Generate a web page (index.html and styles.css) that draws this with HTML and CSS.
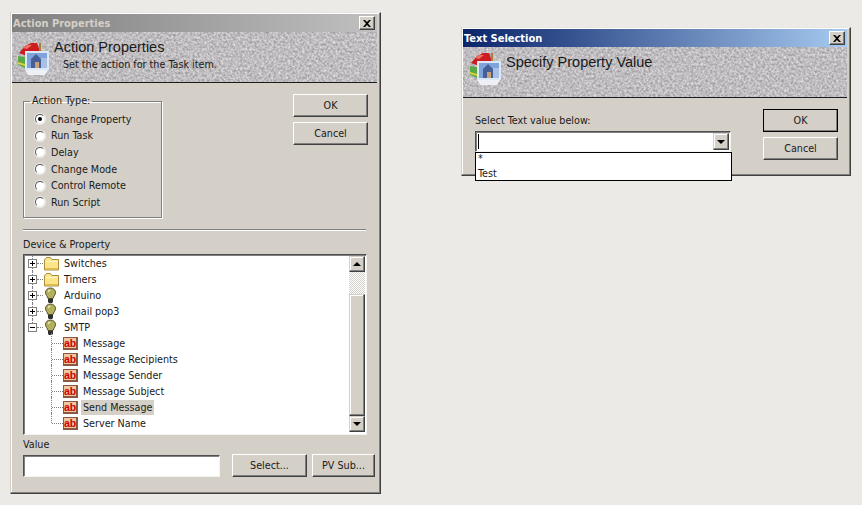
FILE: index.html
```html
<!DOCTYPE html>
<html lang="en">
<head>
<meta charset="utf-8">
<title>Action Properties</title>
<link rel="stylesheet" href="styles.css">
</head>
<body>
<svg class="defs" width="0" height="0" aria-hidden="true">
  <defs>
    <filter id="grain" x="0" y="0" width="100%" height="100%" color-interpolation-filters="sRGB">
      <feTurbulence type="fractalNoise" baseFrequency="0.42" numOctaves="3" seed="7"/>
      <feColorMatrix type="matrix" values="0.42 0 0 0 0.54  0.42 0 0 0 0.53  0.42 0 0 0 0.54  0 0 0 0 1"/>
    </filter>
    <symbol id="house" viewBox="0 0 34 36">
      <path d="M9 28h23l-3 5H12z" fill="#eef0f6"/>
      <path d="M2 14l7 1v11l-7-3z" fill="#58a848"/>
      <path d="M2 20l7 2v2l-7-2z" fill="#e0d040"/>
      <path d="M3 11L9 4l6-3h6l3 8-10 1-3 4z" fill="#cc1c20"/>
      <path d="M7 6l4-3h5l-5 4z" fill="#f07060"/>
      <path d="M23 1h2v9h-2z" fill="#a88038"/>
      <path d="M9 9h24v19H9z" fill="#dde8f6"/>
      <path d="M11 11h20v15H11z" fill="#7fa4dc"/>
      <path d="M15 17l5-5 5 5v9H15z" fill="#465f96"/>
      <path d="M19 20h4v6h-4z" fill="#c8a078"/>
      <path d="M25 16h6v10h-6z" fill="#a8c0e4"/>
    </symbol>
    <symbol id="folder" viewBox="0 0 17 15">
      <path d="M2 3.500L3.500 1.500h4L9 3.500h6.500v10.500H1.500V3.500z" fill="#fbe48a" stroke="#a8903c"/>
      <path d="M2.500 5.500h12.500" stroke="#fff6c8" fill="none"/>
      <path d="M2.500 12.500h12.500" stroke="#e8b840" fill="none"/>
    </symbol>
    <symbol id="bulb" viewBox="0 0 13 17">
      <path d="M6.500 1C3.400 1 1.500 3.200 1.500 5.700c0 2.200 2 3.500 2.500 5.800h5c.5-2.300 2.500-3.600 2.500-5.800C11.500 3.200 9.600 1 6.500 1z" fill="#b4b05c" stroke="#50503a"/>
      <path d="M4 4.500l2-1.500" stroke="#f2f0c0" stroke-width="1.500"/>
      <path d="M4 12h5v3l-1 1H5l-1-1z" fill="#303030"/>
    </symbol>
  </defs>
</svg>

<main class="desktop">

  <section class="window window-action">
    <header class="titlebar titlebar-inactive">
      <span class="title-text">Action Properties</span>
      <span class="close"><svg class="close-x" viewBox="0 0 8 7"><path d="M0 0h2l2 2 2-2h2L5 3.500 8 7H6L4 5 2 7H0l3-3.500z"/></svg></span>
    </header>
    <div class="banner banner-action">
      <svg class="texture"><rect width="100%" height="100%" filter="url(#grain)"/></svg>
      <svg class="banner-icon"><use href="#house"/></svg>
      <div class="banner-text">
        <div class="banner-title">Action Properties</div>
        <div class="banner-sub">Set the action for the Task item.</div>
      </div>
    </div>

    <div class="action-body">
      <div class="action-top">
        <fieldset class="group">
          <legend class="group-legend">Action Type:</legend>
          <div class="radio radio-on"><span class="radio-dot"></span>Change Property</div>
          <div class="radio"><span class="radio-dot"></span>Run Task</div>
          <div class="radio"><span class="radio-dot"></span>Delay</div>
          <div class="radio"><span class="radio-dot"></span>Change Mode</div>
          <div class="radio"><span class="radio-dot"></span>Control Remote</div>
          <div class="radio"><span class="radio-dot"></span>Run Script</div>
        </fieldset>
        <div class="button-col button-col-action">
          <button class="btn btn-wide">OK</button>
          <button class="btn btn-wide">Cancel</button>
        </div>
      </div>

      <div class="separator"></div>

      <div class="field-label label-device">Device &amp; Property</div>
      <div class="tree-box">
        <div class="tree">
          <div class="row row-root"><span class="exp exp-plus"></span><svg class="ic-folder"><use href="#folder"/></svg><span class="row-text">Switches</span></div>
          <div class="row row-root"><span class="exp exp-plus"></span><svg class="ic-folder"><use href="#folder"/></svg><span class="row-text">Timers</span></div>
          <div class="row row-root"><span class="exp exp-plus"></span><svg class="ic-bulb"><use href="#bulb"/></svg><span class="row-text">Arduino</span></div>
          <div class="row row-root"><span class="exp exp-plus"></span><svg class="ic-bulb"><use href="#bulb"/></svg><span class="row-text">Gmail pop3</span></div>
          <div class="row row-root row-open"><span class="exp"></span><svg class="ic-bulb"><use href="#bulb"/></svg><span class="row-text">SMTP</span></div>
          <div class="row row-child"><span class="ab">ab</span><span class="row-text">Message</span></div>
          <div class="row row-child"><span class="ab">ab</span><span class="row-text">Message Recipients</span></div>
          <div class="row row-child"><span class="ab">ab</span><span class="row-text">Message Sender</span></div>
          <div class="row row-child"><span class="ab">ab</span><span class="row-text">Message Subject</span></div>
          <div class="row row-child"><span class="ab">ab</span><span class="row-text row-selected">Send Message</span></div>
          <div class="row row-child row-last"><span class="ab">ab</span><span class="row-text">Server Name</span></div>
        </div>
        <div class="scrollbar">
          <span class="sb-btn"><span class="tri-up"></span></span>
          <span class="sb-track"></span>
          <span class="sb-thumb"></span>
          <span class="sb-btn"><span class="tri-down"></span></span>
        </div>
      </div>

      <div class="field-label label-value">Value</div>
      <div class="value-row">
        <div class="input"></div>
        <button class="btn btn-select">Select...</button>
        <button class="btn btn-pv">PV Sub...</button>
      </div>
    </div>
  </section>

  <section class="window window-text">
    <header class="titlebar titlebar-active">
      <span class="title-text">Text Selection</span>
      <span class="close"><svg class="close-x" viewBox="0 0 8 7"><path d="M0 0h2l2 2 2-2h2L5 3.500 8 7H6L4 5 2 7H0l3-3.500z"/></svg></span>
    </header>
    <div class="banner banner-text-sel">
      <svg class="texture"><rect width="100%" height="100%" filter="url(#grain)"/></svg>
      <svg class="banner-icon"><use href="#house"/></svg>
      <div class="banner-text">
        <div class="banner-title">Specify Property Value</div>
      </div>
    </div>
    <div class="text-body">
      <div class="text-left">
        <div class="field-label">Select Text value below:</div>
        <div class="combo">
          <span class="caret"></span>
          <span class="sb-btn combo-btn"><span class="tri-down"></span></span>
        </div>
      </div>
      <div class="button-col button-col-text">
        <button class="btn btn-wide btn-default">OK</button>
        <button class="btn btn-wide">Cancel</button>
      </div>
    </div>
    <div class="dropdown">
      <div class="drop-item drop-star">*</div>
      <div class="drop-item">Test</div>
    </div>
  </section>

</main>
</body>
</html>
```
FILE: styles.css
```css
* { box-sizing: border-box; }

html, body {
  margin: 0;
  padding: 0;
  background: #ebeae6;
}

body {
  font-family: "DejaVu Sans Condensed", "DejaVu Sans", sans-serif;
  font-stretch: condensed;
  font-size: 10.7px;
  color: #1a1a1a;
}

.defs { position: absolute; }

.desktop {
  position: relative;
  width: 862px;
  height: 505px;
  overflow: hidden;
}

/* Windows sit on a free canvas */
.window {
  position: absolute;
  display: flex;
  flex-direction: column;
  background: #d4d0c8;
  padding: 1px 3px 3px 1px;
  border: 1px solid;
  border-color: #e8e6e0 #404040 #404040 #d4d0c8;
  box-shadow: inset -1px -1px 0 #808080, inset 1px 1px 0 #ffffff;
}

.window-action { left: 10px; top: 12px; width: 371px; height: 482px; }
.window-text { left: 461px; top: 27px; width: 390px; height: 149px; }

.titlebar {
  display: flex;
  align-items: center;
  justify-content: space-between;
  height: 18px;
  flex: none;
  padding: 0 2px 0 1px;
  font-weight: bold;
  font-size: 11px;
}

.titlebar-inactive {
  background: linear-gradient(90deg, #808080, #c0c0c0);
  color: #d4d0c8;
}

.titlebar-active {
  background: linear-gradient(90deg, #0a246a, #a6caf0);
  color: #ffffff;
}

.close {
  display: flex;
  align-items: center;
  justify-content: center;
  width: 16px;
  height: 14px;
  background: #d4d0c8;
  border: 1px solid;
  border-color: #ffffff #404040 #404040 #ffffff;
  box-shadow: inset -1px -1px 0 #808080;
}

.close-x { width: 8px; height: 7px; fill: #000; }

.banner {
  position: relative;
  height: 51px;
  flex: none;
  display: flex;
  overflow: hidden;
  border-bottom: 1px solid #1c1c1c;
}

.texture {
  position: absolute;
  inset: 0;
  width: 100%;
  height: 100%;
}

.banner-icon {
  position: relative;
  flex: none;
  width: 34px;
  height: 36px;
  margin: 10px 4px 0 4px;
}

.banner-text { position: relative; }

.banner-title {
  font-family: "Liberation Sans", sans-serif;
  font-size: 14.500px;
  line-height: 18px;
  margin-top: 6px;
}

.banner-sub {
  line-height: 14px;
  margin: 2px 0 0 9px;
}

.banner-text-sel .banner-title { margin-top: 6px; }
.banner-text-sel .banner-icon { margin: 5px 4px 0 5px; }

.action-body {
  flex: 1;
  display: flex;
  flex-direction: column;
  padding: 12px 0 0 11px;
}

.action-top {
  display: flex;
  justify-content: space-between;
  align-items: flex-start;
  padding-right: 9px;
}

.group {
  width: 139px;
  height: 123px;
  margin: 0;
  padding: 4px 0 0 11px;
  border: 1px solid #808080;
  box-shadow: 1px 1px 0 #ffffff, inset 1px 1px 0 #ffffff;
  display: flex;
  flex-direction: column;
}

.group-legend {
  padding: 0 2px;
  margin-left: -5px;
  line-height: 12px;
}

.radio {
  display: flex;
  align-items: center;
  gap: 6px;
  height: 16.600px;
  white-space: nowrap;
}

.radio-dot {
  position: relative;
  width: 10px;
  height: 10px;
  flex: none;
  border-radius: 50%;
  background: #fff;
  border: 1px solid;
  border-color: #555 #ececec #ececec #555;
  box-shadow: 0 0 0 1px rgba(255, 255, 255, 0.6);
}

.radio-on .radio-dot::after {
  content: "";
  position: absolute;
  left: 2px;
  top: 2px;
  width: 4px;
  height: 4px;
  border-radius: 50%;
  background: #000;
}

.button-col {
  display: flex;
  flex-direction: column;
  gap: 5px;
}

.button-col-action { margin-top: -1px; }

.btn {
  font: inherit;
  color: inherit;
  background: #d4d0c8;
  padding: 0;
  border: 1px solid;
  border-color: #ffffff #404040 #404040 #ffffff;
  box-shadow: inset -1px -1px 0 #808080;
}

.btn-wide { width: 75px; height: 23px; }
.btn-default { outline: 1px solid #000; outline-offset: -1px; }

.separator {
  height: 2px;
  flex: none;
  margin: 11px 11px 0 0;
  background: #808080;
  border-bottom: 1px solid #fff;
}

.field-label { line-height: 13px; white-space: nowrap; }
.label-device { margin-top: 7px; }
.label-value { margin-top: 3px; }

.tree-box {
  display: flex;
  width: 344px;
  height: 181px;
  margin-top: 3px;
  background: #fff;
  border: 1px solid;
  border-color: #505050 #f4f4f0 #f4f4f0 #505050;
  box-shadow: inset 1px 1px 0 #808080;
}

.tree {
  flex: 1;
  padding: 0 0 0 4px;
}

.row {
  position: relative;
  display: flex;
  align-items: center;
  height: 16px;
  white-space: nowrap;
}

.exp {
  position: relative;
  z-index: 1;
  width: 9px;
  height: 9px;
  flex: none;
  border: 1px solid #808080;
  background:
    linear-gradient(#000, #000) center / 5px 1px no-repeat,
    #fff;
}

.exp-plus {
  background:
    linear-gradient(#000, #000) center / 5px 1px no-repeat,
    linear-gradient(#000, #000) center / 1px 5px no-repeat,
    #fff;
}

/* tree connector lines drawn over the rows */
.row-root::before {
  content: "";
  position: absolute;
  left: 4px;
  top: 0;
  bottom: 0;
  border-left: 1px dotted #808080;
}

.row-open::before { bottom: 8px; }

.row-root::after {
  content: "";
  position: absolute;
  left: 9px;
  width: 6px;
  top: 8px;
  border-top: 1px dotted #808080;
}

.row-child::before {
  content: "";
  position: absolute;
  left: 23px;
  top: -2px;
  height: 18px;
  border-left: 1px dotted #808080;
}

.row-last::before { height: 10px; }

.row-child::after {
  content: "";
  position: absolute;
  left: 24px;
  width: 11px;
  top: 8px;
  border-top: 1px dotted #808080;
}

.ic-folder { width: 17px; height: 15px; flex: none; margin: 0 4px 0 6px; }
.ic-bulb { width: 13px; height: 17px; flex: none; margin: 0 7px 0 7px; }

.ab {
  display: block;
  flex: none;
  width: 15px;
  height: 13px;
  margin: 0 3px 0 35px;
  background: #eec8a0;
  border: 1px solid #8a5a40;
  border-right-width: 2px;
  border-bottom-width: 2px;
  color: #cc0000;
  font-family: "Liberation Sans", sans-serif;
  font-size: 10.500px;
  font-weight: bold;
  line-height: 10px;
  text-align: center;
}

.row-text { padding: 1px 2px; line-height: 13px; }
.row-selected { background: #d4d0c8; }
.row-root .row-text { padding-left: 0; }

.scrollbar {
  width: 16px;
  flex: none;
  display: flex;
  flex-direction: column;
  margin: 1px 1px 2px 0;
}

.sb-btn {
  display: flex;
  align-items: center;
  justify-content: center;
  width: 16px;
  height: 16px;
  flex: none;
  background: #d4d0c8;
  border: 1px solid;
  border-color: #d4d0c8 #404040 #404040 #d4d0c8;
  box-shadow: inset -1px -1px 0 #808080, inset 1px 1px 0 #ffffff;
}

.sb-track {
  height: 22px;
  flex: none;
  background: repeating-conic-gradient(#d4d0c8 0 25%, #ffffff 0 50%) 0 0 / 2px 2px;
}

.sb-thumb {
  flex: 1;
  background: #d4d0c8;
  border: 1px solid;
  border-color: #d4d0c8 #404040 #404040 #d4d0c8;
  box-shadow: inset -1px -1px 0 #808080, inset 1px 1px 0 #ffffff;
}

.tri-up, .tri-down {
  width: 0;
  height: 0;
  border-left: 4px solid transparent;
  border-right: 4px solid transparent;
}

.tri-up { border-bottom: 4px solid #000; }
.tri-down { border-top: 4px solid #000; }

.value-row {
  display: flex;
  align-items: center;
  margin-top: 3px;
}

.input {
  width: 197px;
  height: 22px;
  background: #fff;
  border: 1px solid;
  border-color: #505050 #f4f4f0 #f4f4f0 #505050;
  box-shadow: inset 1px 1px 0 #808080;
}

.btn-select { width: 75px; height: 23px; margin-left: 12px; }
.btn-pv { width: 63px; height: 23px; margin-left: 5px; }

.text-body {
  flex: 1;
  display: flex;
  justify-content: space-between;
  padding: 16px 9px 0 12px;
}

.combo {
  position: relative;
  display: flex;
  align-items: center;
  justify-content: space-between;
  width: 256px;
  height: 21px;
  margin-top: 4px;
  padding: 0 1px 0 2px;
  background: #fff;
  border: 1px solid;
  border-color: #505050 #f4f4f0 #f4f4f0 #505050;
  box-shadow: inset 1px 1px 0 #808080;
}

.caret { width: 1px; height: 15px; background: #000; }
.combo-btn { height: 17px; }

.button-col-text { margin-top: -5px; }

/* open combo list lies over the dialog edge */
.dropdown {
  position: absolute;
  left: 13px;
  top: 124px;
  width: 257px;
  height: 29px;
  background: #fff;
  border: 1px solid #000;
  padding-left: 2px;
}

.drop-item { height: 13px; line-height: 13px; }
.drop-star { height: 14px; line-height: 11px; }
```
